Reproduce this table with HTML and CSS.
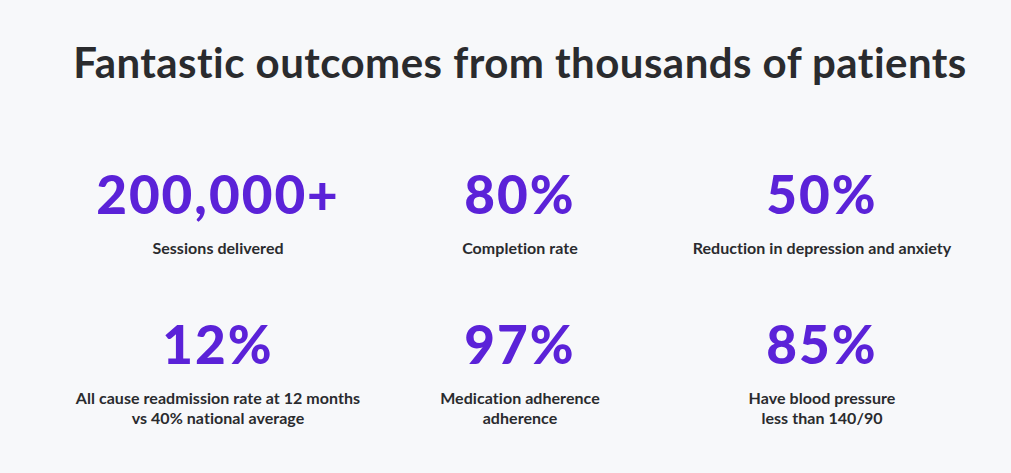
FILE: index.html
```html
<!DOCTYPE html>
<html lang="en">
<head>
<meta charset="utf-8">
<title>Outcomes</title>
<link rel="stylesheet" href="styles.css">
</head>
<body>
<main class="outcomes">
  <h1 class="title">Fantastic outcomes from thousands of patients</h1>
  <div class="stats">
    <div class="stat"><div class="num">200,000+</div><div class="label">Sessions delivered</div></div>
    <div class="stat"><div class="num">80%</div><div class="label">Completion rate</div></div>
    <div class="stat"><div class="num">50%</div><div class="label">Reduction in depression and anxiety</div></div>
    <div class="stat"><div class="num">12%</div><div class="label">All cause readmission rate at 12 months<br>vs 40% national average</div></div>
    <div class="stat"><div class="num">97%</div><div class="label">Medication adherence<br>adherence</div></div>
    <div class="stat"><div class="num">85%</div><div class="label">Have blood pressure<br>less than 140/90</div></div>
  </div>
</main>
</body>
</html>
```

FILE: styles.css
```css
html, body {
  margin: 0;
  padding: 0;
  background: #f7f8fa;
}
body {
  font-family: "Lato", "Liberation Sans", sans-serif;
  color: #2a2b2e;
}
.outcomes {
  width: 906px;
  margin-left: 67px;
  padding-top: 37px;
}
.title {
  margin: 0;
  font-size: 42px;
  line-height: 50px;
  font-weight: 700;
  letter-spacing: 0.45px;
  text-align: center;
  color: #2a2b2e;
}
.stats {
  display: grid;
  grid-template-columns: repeat(3, 1fr);
  row-gap: 58px;
  margin-top: 79px;
}
.stat {
  display: flex;
  flex-direction: column;
  align-items: center;
  text-align: center;
  gap: 16px;
}
.num {
  font-size: 53px;
  line-height: 56px;
  font-weight: 900;
  letter-spacing: 2px;
  color: #5b22d8;
}
.label {
  font-size: 16px;
  line-height: 20px;
  font-weight: 700;
  letter-spacing: 0.05px;
  color: #2a2b2e;
}
```
